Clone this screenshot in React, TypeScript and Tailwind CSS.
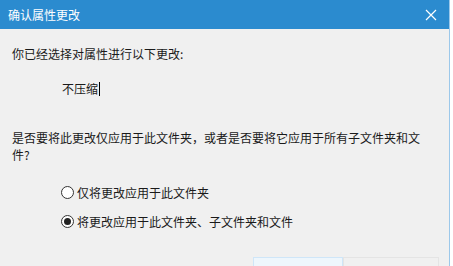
import React from "react";

export default function App() {
  const font = { fontFamily: '"Noto Sans CJK SC", "Microsoft YaHei", sans-serif' };
  return (
    <div className="w-[453px] h-[266px] bg-white overflow-hidden" style={font}>
      <div className="w-[450px] h-[266px] flex flex-col bg-[#f0f0f0] border-r border-[#9cc8ea]">
        <div className="h-[29px] bg-[#2b8bcf] flex items-center justify-between pl-[8px] pr-[10px] text-white text-[12px] shrink-0">
          <span>确认属性更改</span>
          <svg width="12" height="12" viewBox="0 0 12 12" className="mr-[2px]">
            <path d="M1 1 L11 11 M11 1 L1 11" stroke="white" strokeWidth="1.2" />
          </svg>
        </div>
        <div className="flex flex-col pl-[12px] text-[12px] text-[#1a1a1a] leading-[17px]">
          <div className="mt-[16px]">你已经选择对属性进行以下更改:</div>
          <div className="mt-[18px] pl-[50px] flex items-center">
            <span>不压缩</span>
            <span className="w-px h-[14px] bg-black ml-[1px]" />
          </div>
          <div className="mt-[32px] w-[414px]">是否要将此更改仅应用于此文件夹，或者是否要将它应用于所有子文件夹和文件?</div>
          <div className="mt-[21px] pl-[49px] flex items-center gap-[3px]">
            <span className="w-[13px] h-[13px] rounded-full border border-[#333] bg-white" />
            <span>仅将更改应用于此文件夹</span>
          </div>
          <div className="mt-[12px] pl-[49px] flex items-center gap-[3px]">
            <span className="w-[13px] h-[13px] rounded-full border border-[#333] bg-white flex items-center justify-center">
              <span className="w-[7px] h-[7px] rounded-full bg-[#222]" />
            </span>
            <span>将更改应用于此文件夹、子文件夹和文件</span>
          </div>
          <div className="mt-[27px] flex pl-[241px]">
            <div className="w-[90px] h-[10px] border border-[#cfe6f8] bg-[#eef6fc]" />
            <div className="w-[96px] h-[10px] border border-[#e4e4e4] bg-[#f0f0f0]" />
          </div>
        </div>
      </div>
    </div>
  );
}
